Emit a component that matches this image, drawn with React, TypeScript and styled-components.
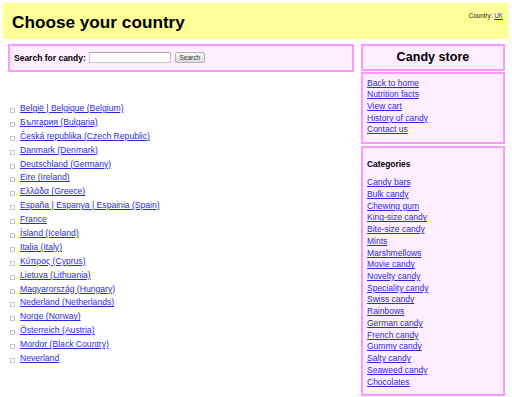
import React from "react";
import styled, { createGlobalStyle } from "styled-components";

const Global = createGlobalStyle`
  html, body { margin: 0; padding: 0; background: #fff; }
  body { font-family: "Liberation Sans", Arial, sans-serif; color: #000; }
  a { color: #2a2ae6; text-decoration: underline; }
`;

const Page = styled.div`
  padding: 3px 3px 0 3px;
  width: 512px;
  box-sizing: border-box;
`;

const Header = styled.header`
  background: #ffff99;
  height: 36px;
  display: flex;
  justify-content: space-between;
  align-items: flex-start;
  padding: 0 6px 0 9px;
  box-sizing: border-box;
`;

const Title = styled.h1`
  margin: 0;
  font-size: 17.2px;
  font-weight: bold;
  line-height: 20px;
  padding-top: 8.5px;
`;

const CountryPick = styled.div`
  font-size: 6.3px;
  line-height: 8px;
  padding-top: 8.5px;
  color: #222;
`;

const Body = styled.div`
  display: flex;
  align-items: flex-start;
  margin-top: 5px;
  padding-left: 5px;
  gap: 7px;
`;

const Main = styled.main`
  width: 346px;
  flex: none;
`;

const SearchBox = styled.form`
  height: 28px;
  box-sizing: border-box;
  border: 2px solid #ff99ff;
  background: #ffeeff;
  display: flex;
  align-items: center;
  padding: 0 4px 1px 4px;
  font-size: 8.5px;
  font-weight: bold;
`;

const SearchInput = styled.input`
  width: 82px;
  height: 11px;
  box-sizing: border-box;
  border: 1px solid #c4c4c4;
  border-top-color: #a9a9a9;
  margin: 0 0 0 3px;
  padding: 0;
  background: #fff;
`;

const SearchButton = styled.button`
  width: 30px;
  height: 11px;
  box-sizing: border-box;
  margin-left: 4px;
  padding: 0;
  border: 1px solid #b4b4b4;
  border-radius: 2px;
  background: linear-gradient(#f6f6f6, #dedede);
  font-family: "Liberation Sans", Arial, sans-serif;
  font-size: 6.5px;
  color: #333;
  line-height: 9px;
`;

const CountryList = styled.ul`
  list-style: none;
  margin: 30px 0 0 0;
  padding: 0;
`;

const CountryItem = styled.li`
  position: relative;
  font-size: 8.6px;
  line-height: 13.9px;
  height: 13.9px;
  padding-left: 12px;
  &::before {
    content: "";
    position: absolute;
    left: 1.5px;
    top: 6px;
    width: 3px;
    height: 3px;
    border: 0.6px solid #c6c6c6;
  }
`;

const Sidebar = styled.aside`
  width: 144px;
  flex: none;
  display: flex;
  flex-direction: column;
`;

const Box = styled.div<{ $mt?: number }>`
  border: 2px solid #ff99ff;
  background: #ffeeff;
  box-sizing: border-box;
  margin-top: ${(p) => p.$mt ?? 0}px;
`;

const StoreTitle = styled.h2`
  margin: 0;
  height: 23px;
  font-size: 12.6px;
  line-height: 23px;
  text-align: center;
  font-weight: bold;
`;

const LinkList = styled.div<{ $pt: number; $pb: number }>`
  display: flex;
  flex-direction: column;
  padding: ${(p) => p.$pt}px 4px ${(p) => p.$pb}px 4px;
  font-size: 8.5px;
  line-height: 11.72px;
  a { align-self: flex-start; }
`;

const Heading = styled.h3`
  margin: 0 0 7px 0;
  font-size: 8.4px;
  line-height: 11.7px;
  font-weight: bold;
`;

const countries = [
  "België | Belgique (Belgium)",
  "България  (Bulgaria)",
  "Česká republika (Czech Republic)",
  "Danmark (Denmark)",
  "Deutschland (Germany)",
  "Eire (Ireland)",
  "Ελλάδα (Greece)",
  "España | Espanya | Espainia (Spain)",
  "France",
  "Ísland (Iceland)",
  "Italia (Italy)",
  "Κύπρος (Cyprus)",
  "Lietuva (Lithuania)",
  "Magyarország (Hungary)",
  "Nederland (Netherlands)",
  "Norge (Norway)",
  "Österreich (Austria)",
  "Mordor (Black Country)",
  "Neverland ",
];

const navLinks = ["Back to home", "Nutrition facts", "View cart", "History of candy", "Contact us"];

const categories = [
  "Candy bars",
  "Bulk candy",
  "Chewing gum",
  "King-size candy",
  "Bite-size candy",
  "Mints",
  "Marshmellows",
  "Movie candy",
  "Novelty candy",
  "Speciality candy",
  "Swiss candy",
  "Rainbows",
  "German candy",
  "French candy",
  "Gummy candy",
  "Salty candy",
  "Seaweed candy",
  "Chocolates",
];

export default function App() {
  return (
    <Page>
      <Global />
      <Header>
        <Title>Choose your country</Title>
        <CountryPick>
          Country: <a href="#">UK</a>
        </CountryPick>
      </Header>
      <Body>
        <Main>
          <SearchBox onSubmit={(e) => e.preventDefault()}>
            Search for candy:
            <SearchInput type="text" />
            <SearchButton type="submit">Search</SearchButton>
          </SearchBox>
          <CountryList>
            {countries.map((c) => (
              <CountryItem key={c}>
                <a href="#">{c}</a>
              </CountryItem>
            ))}
          </CountryList>
        </Main>
        <Sidebar>
          <Box>
            <StoreTitle>Candy store</StoreTitle>
          </Box>
          <Box $mt={1}>
            <LinkList $pt={3.5} $pb={6}>
              {navLinks.map((l) => (
                <a href="#" key={l}>
                  {l}
                </a>
              ))}
            </LinkList>
          </Box>
          <Box $mt={2}>
            <LinkList $pt={10.5} $pb={6}>
              <Heading>Categories</Heading>
              {categories.map((l) => (
                <a href="#" key={l}>
                  {l}
                </a>
              ))}
            </LinkList>
          </Box>
        </Sidebar>
      </Body>
    </Page>
  );
}
